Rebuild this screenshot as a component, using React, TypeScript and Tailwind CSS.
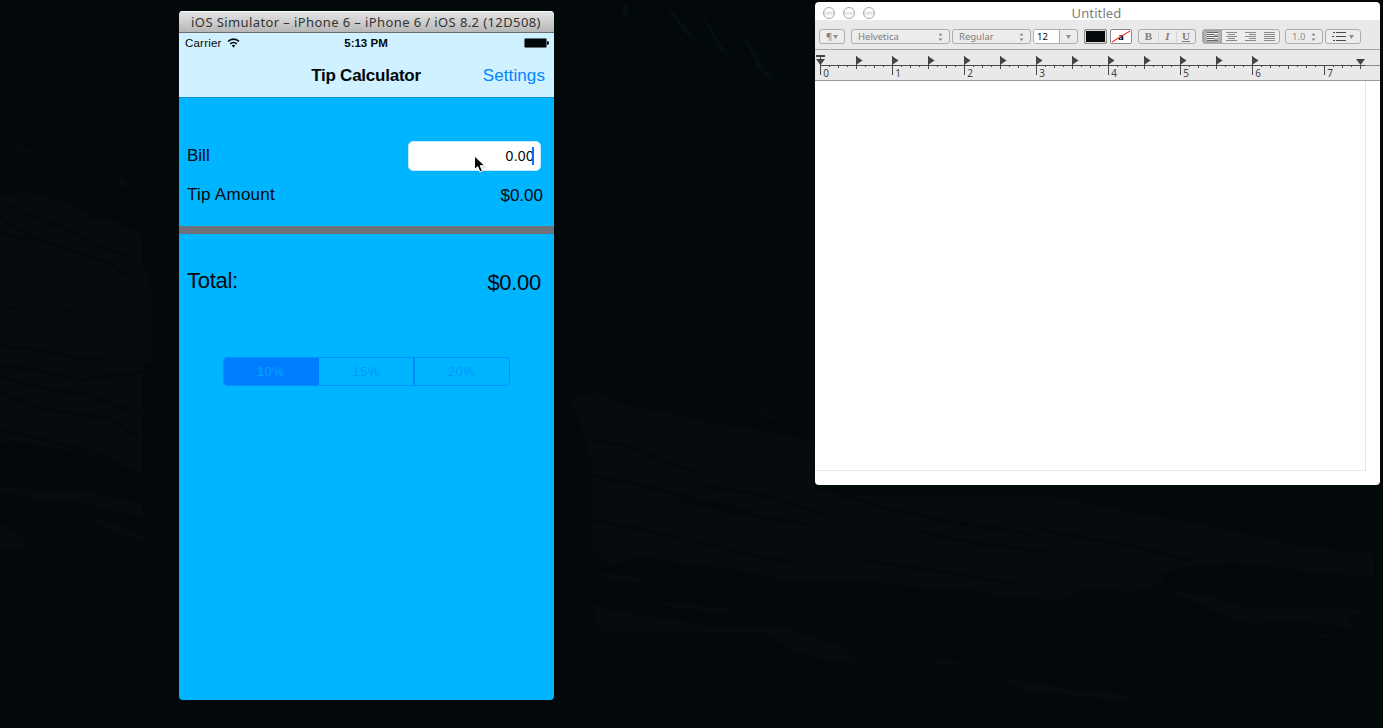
import React from "react";

const IOS_FONT = "font-['Liberation_Sans',sans-serif]";
const MAC_FONT = "font-['Noto_Sans','Open_Sans',sans-serif]";

function Wallpaper() {
  return (
    <svg className="absolute inset-0" width="1383" height="728" viewBox="0 0 1383 728" fill="#050b0f">
      <path d="M0 196l28-4 30 8 12 2 22 16 20 2 30 14v30l11 25v72l-11 4v107l-40-12-40-10-62-8z" />
      <path d="M0 487l60 4 20-1 62 14v13l-60-14-48-4-34-8z" />
      <path d="M88 517l30 8 24 10v6l-30-10zM0 523l26 16-4 12-22-4zM50 541l16 6 16 0 24 12-14-4-16-8z" />
      <path d="M12 139l22 14-12-2zM50 145l10 8-6-2zM80 133l7 2-3 4zM121 132l12 1-4 6zM115 175l9 4 13 16-16-10zM34 131l9 4-6-1z" />
      <path d="M570 396L591 398V388L625 405L665 412L700 421L760 430L815 442V491L885 497L1048 495L1137 513L1210 526L1263 537L1300 547L1374 553V578L1295 570L1230 562L1190 567L1160 572L1164 583L1130 592L1090 588L1060 600L1006 597L960 588L917 587L850 580L796 583L750 572L681 563L640 556L610 565L591 550V460L580 424Z" />
      <path d="M591 605L640 615L720 627L790 629L840 645L860 664L820 658L790 650L765 632L700 633L600 632Z" />
      <path d="M1001 681l20-1 60 11 44 3 6 4-12 2-60-6-30-2z" />
      <path d="M1169 590l40 6 45 13 50-2 66 2-25 10 10 10-46-7-40-2-14 7-44-17zM1300 632l34 4-6 3zM917 655l46 8-16 3zM592 572l40 4 20 8-40-4zM652 601l50 5 30 3-10 4-50-6zM865 636l36 8-20-2z" />
      <path d="M744 402l26 11 18 12-22-8zM678 397l18 8-10-1z" />
      <path d="M665 0l10 14 12 14 10 14-14-10-14-22zM700 10l18 28 10 18-12-10zM740 30l20 30 18 28-20-20zM622 3l7 4-1 13-5-6z" fill="#04100c" />
      <g stroke="#03080b" strokeWidth="3" fill="none" strokeLinecap="round">
        <path d="M0 218l34 20 30 10 42 14 26 16M10 206l20 10 34 12 34 18 30 10M0 234l32 6M8 306l12 4M62 308l10 2M0 346l40 4 34 8 32 0M0 366l36 4 44 10 62-8M0 378l40 10 44 6 56 20M0 393l44 16 66 10 28 18M0 430l52 12 60 16M10 442l50 8 60 14" />
        <path d="M594 441l30 4 30 12 40 14M594 476l60 12 60 16 40 8M680 500l60 14 70 10M594 520l70 14 80 20 50 8M840 495l50 14 70 15 60 8M920 532l60 12 70 8M700 485l60 10 60 18M1040 530l80 14 70 16M960 522l70 12M860 560l70 10 90 14" />
      </g>
    </svg>
  );
}

function WifiIcon() {
  return (
    <svg className="ml-[5px]" width="13" height="10" viewBox="0 0 13 10" fill="none" stroke="#03080b">
      <path d="M1 3.5C4 .4 9 .4 12 3.5" strokeWidth="1.7" />
      <path d="M3.2 5.9C5 4 8 4 9.8 5.9" strokeWidth="1.6" />
      <path d="M6.5 9.4L4.7 7.5q1.8-1.5 3.6 0z" fill="#03080b" stroke="none" />
    </svg>
  );
}

function BatteryIcon() {
  return (
    <svg width="25" height="10" viewBox="0 0 25 10">
      <rect x=".5" y=".5" width="22" height="9" rx="1" fill="#03080b" stroke="#66757c" />
      <path d="M23 3q2 0 2 2t-2 2z" fill="#03080b" />
    </svg>
  );
}

function Cursor() {
  return (
    <svg className="absolute left-[64px] top-[13px]" width="14" height="19" viewBox="0 0 14 19">
      <path d="M1.5 1v13.6l3.2-3 2.2 5.2 2.5-1.1-2.2-5h4.5z" fill="#03080b" stroke="#fff" strokeWidth="1" />
      <path d="M6 17.6l3.6-1.3M9 12h4" stroke="#b8b8b8" strokeWidth=".7" />
    </svg>
  );
}

function Simulator() {
  return (
    <section className={`absolute left-[179px] top-[11px] flex h-[689px] w-[375px] flex-col overflow-hidden rounded-[4px] bg-[#00b5ff] text-[#03080b] ${IOS_FONT}`}>
      <header className={`flex h-[22px] shrink-0 items-center justify-center border-b border-[#6d6d6d] bg-linear-to-b from-[#e6e6e6] to-[#b7b7b7] text-[13px] whitespace-nowrap text-[#333] shadow-[inset_0_1px_0_#f8f8f8] ${MAC_FONT}`}>
        <span className="pr-px leading-[18px] tracking-[0.4px]">iOS Simulator – iPhone 6 – iPhone 6 / iOS 8.2 (12D508)</span>
      </header>
      <div className="flex h-[65px] shrink-0 flex-col border-b border-[#0a8fc9] bg-[#d0f1ff]">
        <div className="grid h-[20px] grid-cols-3 items-center pr-[5px] pl-[6px] text-[11.5px] leading-[20px]">
          <span className="flex h-[20px] items-center tracking-[0.2px]">Carrier<WifiIcon /></span>
          <span className="h-[20px] pr-[2px] text-center font-bold">5:13 PM</span>
          <span className="flex justify-end"><BatteryIcon /></span>
        </div>
        <div className="grid h-[44px] grid-cols-[1fr_auto_1fr] items-center pt-[2px] pr-[9px] pl-[8px] text-[17px]">
          <span />
          <h1 className="font-bold tracking-[-0.24px]">Tip Calculator</h1>
          <button className="text-right tracking-[0.1px] text-[#0084ff]">Settings</button>
        </div>
      </div>
      <main className="flex flex-col">
        <div className="mt-[43px] flex h-[30px] items-center justify-between pr-[13px] pl-[8px]">
          <label className="text-[17px]">Bill</label>
          <div className="relative flex h-[30px] w-[133px] items-center justify-end rounded-[5px] border border-[#c4e8f5] bg-white pr-[6px] text-[14px]">
            <span className="tracking-[0.3px]">0.00</span>
            <span className="-ml-[2px] h-[18px] w-[2px] bg-[#0a6cff]" />
            <Cursor />
          </div>
        </div>
        <div className="mt-[13px] flex h-[22px] items-center justify-between pr-[11px] pl-[8px] text-[17px]">
          <span className="tracking-[0.27px]">Tip Amount</span>
          <span className="pt-px">$0.00</span>
        </div>
        <div className="mt-[20px] h-[8px] bg-[#6d717a]" />
        <div className="mt-[31px] flex h-[30px] items-center justify-between pr-[13px] pl-[8px] text-[22px]">
          <span className="tracking-[-0.3px]">Total:</span>
          <span className="pt-[5px] tracking-[-0.3px]">$0.00</span>
        </div>
        <div className="mt-[62px] ml-[44px] grid h-[29px] w-[287px] grid-cols-3 overflow-hidden rounded-[4px] border border-[#0090ff] text-center text-[13px] leading-[27px] tracking-[0.5px] text-[#0096ff]">
          <span className="bg-[#007dff] pr-[2px] text-[#00a5ff]">10%</span>
          <span className="border-r border-[#0088ff]">15%</span>
          <span className="border-l border-[#0088ff] pr-px">20%</span>
        </div>
      </main>
    </section>
  );
}

const PILL = "flex h-[15px] shrink-0 items-center rounded-[3px] border border-[#adadad] bg-[#ececec]";

function Down() {
  return <svg width="5" height="4" viewBox="0 0 5 4"><path d="M0 0h5L2.5 4z" fill="#8c8c8c" /></svg>;
}

function UpDown() {
  return (
    <svg width="5" height="8" viewBox="0 0 5 8" fill="#858585">
      <path d="M.5 2.5h4L2.5 0zM.5 5.5h4L2.5 8z" />
    </svg>
  );
}

function AlignLines({ d, active = false }: { d: string; active?: boolean }) {
  return (
    <span className={active ? "flex h-full w-[19px] items-center justify-center bg-[#b4b4b4] shadow-[inset_0_0_2px_#777]" : "flex h-full w-[19px] items-center justify-center"}>
      <svg width="11" height="9" viewBox="0 0 11 9" stroke={active ? "#666" : "#8b8b8b"} fill="none">
        <path d={d} />
        {active && <path d="M0 1.5h11M0 3.5h7M0 5.5h11M0 7.5h7" stroke="#ededed" />}
      </svg>
    </span>
  );
}

function Ruler() {
  const eighths = Array.from({ length: 61 }, (_, i) => i);
  const tabs = Array.from({ length: 12 }, (_, i) => 41 + i * 36);
  return (
    <div className="shrink-0 border-b border-[#9a9a9a] bg-[#e9e9e9]">
      <svg className="block" width="565" height="30" viewBox="0 0 565 30">
        <path d="M5 15.5h545" stroke="#4a4a4a" />
        <path d="M550 15.5h15" stroke="#8b8b8b" />
        {eighths.map((i) => {
          const end = i % 8 === 0 ? 25 : i % 4 === 0 ? 19 : i % 2 === 0 ? 18 : 17;
          return <path key={i} d={`M${5.5 + i * 9} 15V${end}`} stroke="#4a4a4a" />;
        })}
        {tabs.map((x) => (
          <path key={x} d={`M${x} 6l6.5 4.5-6.5 4.5z M${x} 6h1v10h-1z`} fill="#444" />
        ))}
        <path d="M1 5h9v2H1zM1 9h9l-4.5 6zM5 5h1v10H5zM541 9h9l-4.5 6z" fill="#444" />
        {[0, 1, 2, 3, 4, 5, 6, 7].map((n) => (
          <text key={n} x={8.3 + n * 72} y="27" fontSize="10" fontFamily="'Noto Sans','Open Sans',sans-serif" fill="#444">{n}</text>
        ))}
      </svg>
    </div>
  );
}

function Editor() {
  return (
    <section className={`absolute left-[815px] top-[2px] flex h-[483px] w-[565px] flex-col overflow-hidden rounded-[4px] bg-white ${MAC_FONT}`}>
      <header className="grid h-[18px] shrink-0 grid-cols-[1fr_auto_1fr] items-center pr-[10px] pl-[8px] leading-none">
        <div className="flex gap-[8px] pt-[4px]">
          {[0, 1, 2].map((n) => (
            <i key={n} className="size-[12px] rounded-full border-[1.5px] border-[#a9a9a9] bg-linear-to-b from-white from-30% via-[#dedede] to-white to-80%" />
          ))}
        </div>
        <h2 className="pt-[5px] text-[13px] tracking-[0.1px] text-[#7c7c7c]">Untitled</h2>
        <span />
      </header>
      <div className="flex h-[30px] shrink-0 items-center border-b border-[#a5a5a5] bg-[#e9e9e9] pt-[4px] pl-[4px] text-[9.5px] leading-none whitespace-nowrap text-[#7e7e7e]">
        <div className={`${PILL} w-[26px] justify-center gap-px`}>¶<Down /></div>
        <div className={`${PILL} ml-[6px] w-[99px] justify-between pr-[6px] pl-[6px]`}>Helvetica<UpDown /></div>
        <div className={`${PILL} ml-[2px] w-[79px] justify-between pr-[6px] pl-[6px]`}>Regular<UpDown /></div>
        <div className={`${PILL} ml-[2px] w-[45px] overflow-hidden`}>
          <span className="flex h-full w-[26px] items-center border-r border-[#adadad] bg-white pl-[3px] text-[#111]">12</span>
          <span className="flex flex-1 justify-center"><Down /></span>
        </div>
        <div className="ml-[6px] h-[15px] w-[23px] rounded-[2px] border border-[#8c8c8c] bg-[#03080b] shadow-[inset_0_0_0_1px_#ddd]" />
        <div className="relative ml-[3px] flex h-[15px] w-[22px] items-center justify-center rounded-[2px] border border-[#8c8c8c] bg-white font-['Liberation_Serif',serif] text-[11px] font-bold text-black">
          a
          <svg className="absolute inset-0" width="20" height="13" viewBox="0 0 20 13"><path d="M1 12L19 1" stroke="#ee3a36" strokeWidth="1.2" /></svg>
        </div>
        <div className={`${PILL} ml-[6px] w-[58px] font-['Liberation_Serif',serif] text-[11px]`}>
          <b className="w-[19px] text-center">B</b>
          <i className="w-[19px] border-x border-[#d5d5d5] text-center font-bold">I</i>
          <u className="w-[18px] text-center font-bold">U</u>
        </div>
        <div className={`${PILL} ml-[6px] w-[78px] overflow-hidden`}>
          <AlignLines active d="M0 .5h11M0 2.5h7M0 4.5h11M0 6.5h7M0 8.5h11" />
          <AlignLines d="M0 .5h11M2 2.5h7M0 4.5h11M2 6.5h7M0 8.5h11" />
          <AlignLines d="M0 .5h11M4 2.5h7M0 4.5h11M4 6.5h7M0 8.5h11" />
          <AlignLines d="M0 .5h11M0 2.5h11M0 4.5h11M0 6.5h11M0 8.5h11" />
        </div>
        <div className={`${PILL} ml-[5px] w-[38px] justify-between pr-[6px] pl-[6px] text-[#8c8c8c]`}>1.0<UpDown /></div>
        <div className={`${PILL} ml-[2px] w-[36px] justify-center gap-[3px]`}>
          <svg width="14" height="9" viewBox="0 0 14 9" stroke="#4b4b4b"><path d="M1 .5h2M0 4.5h2M1 8.5h2M4 .5h10M4 4.5h10M4 8.5h10" /></svg>
          <Down />
        </div>
      </div>
      <Ruler />
      <div className="h-[390px] w-[551px] shrink-0 border-r border-b border-[#e6e6e6]" />
    </section>
  );
}

export default function App() {
  return (
    <div className="relative h-[728px] w-[1383px] overflow-hidden bg-[#03080b]">
      <Wallpaper />
      <Simulator />
      <Editor />
    </div>
  );
}
